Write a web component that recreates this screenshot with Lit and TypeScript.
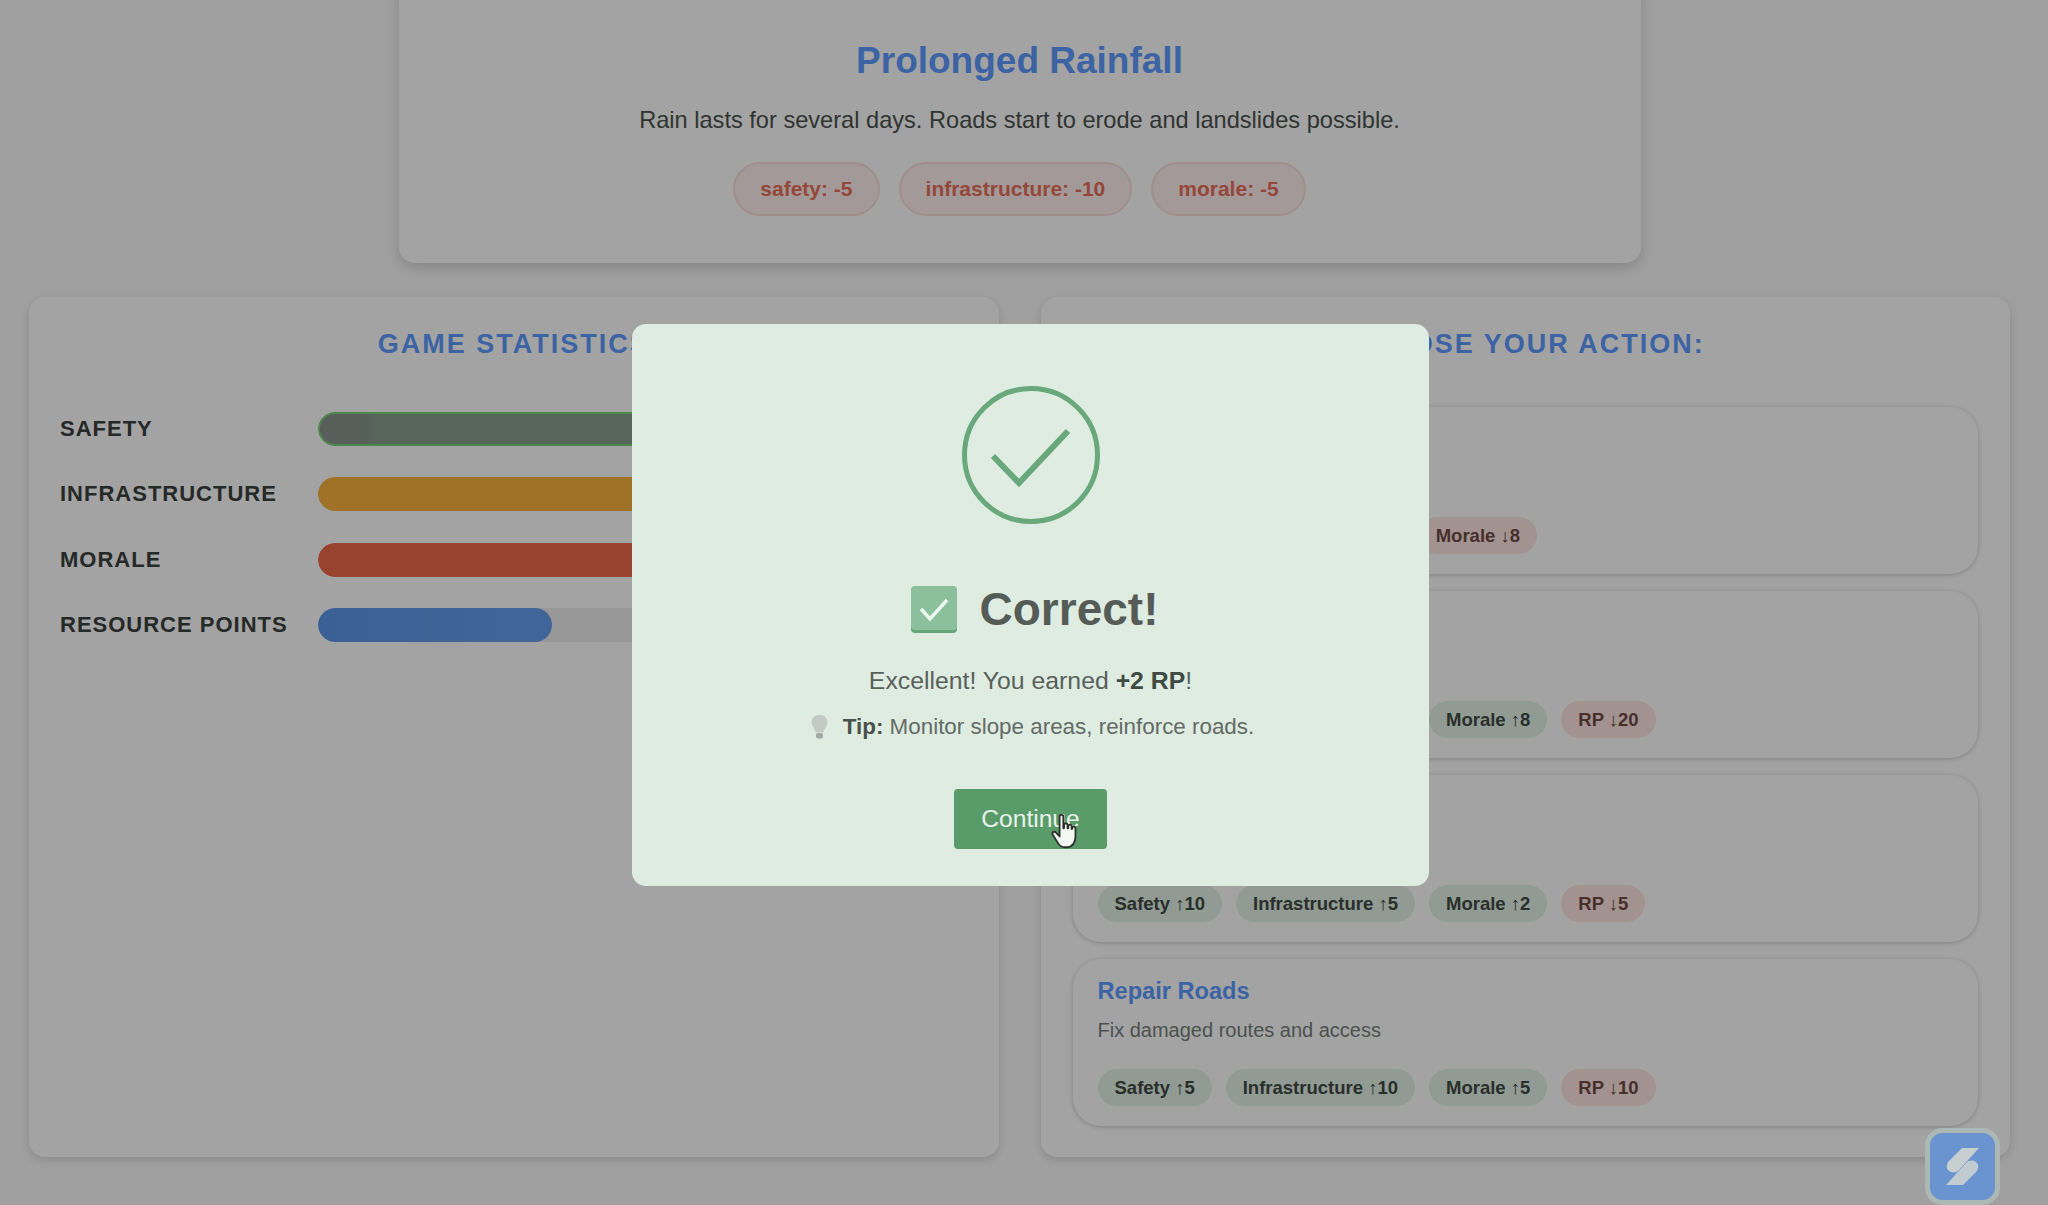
import { LitElement, css, html, svg } from "lit";
import { customElement } from "lit/decorators.js";

type Chip = { label: string; up: boolean };
type Action = { title: string; desc: string; chips: Chip[] };

const up = (label: string): Chip => ({ label, up: true });
const down = (label: string): Chip => ({ label, up: false });

const STATS = [
  { label: "SAFETY", value: 82, cls: "safety" },
  { label: "INFRASTRUCTURE", value: 70, cls: "infra" },
  { label: "MORALE", value: 75, cls: "morale" },
  { label: "RESOURCE POINTS", value: 36, cls: "rp" },
];

const ACTIONS: Action[] = [
  {
    title: "Issue Warning",
    desc: "Alert residents near the slopes",
    chips: [up("Safety ↑5"), up("Infrastructure ↑5"), down("Morale ↓8")],
  },
  {
    title: "Clear Drains",
    desc: "Clear drains and reinforce hillsides",
    chips: [up("Safety ↑5"), up("Infrastructure ↑10"), up("Morale ↑8"), down("RP ↓20")],
  },
  {
    title: "Inspect Slopes",
    desc: "Check slope areas for erosion",
    chips: [up("Safety ↑10"), up("Infrastructure ↑5"), up("Morale ↑2"), down("RP ↓5")],
  },
  {
    title: "Repair Roads",
    desc: "Fix damaged routes and access",
    chips: [up("Safety ↑5"), up("Infrastructure ↑10"), up("Morale ↑5"), down("RP ↓10")],
  },
];

const handCursor = svg`
  <path d="M9 3.5c0-1.6 2.9-1.6 2.9 0v9.2l.6-.1V10c0-1.5 2.7-1.5 2.7.1v2.6l.6-.1v-1.7c0-1.4 2.6-1.4 2.6.2v2.2l.5-.1v-.9c0-1.4 2.5-1.3 2.5.3v6.6c0 4.6-2.4 8.3-6.8 8.3h-1.5c-2.6 0-4-1-5.2-3L3.6 17.6c-.9-1.6 1.3-3 2.6-1.5l2.8 3z"
    fill="#f4f8f4" stroke="#2c302d" stroke-width="1.4" stroke-linejoin="round" />
`;

@customElement("app-root")
export class AppRoot extends LitElement {
  static styles = css`
    :host {
      display: block;
      position: relative;
      height: 1205px;
      overflow: hidden;
      background: #fafafa;
      font-family: "Liberation Sans", Arial, sans-serif;
      color: #5b635e;
    }
    .page {
      padding: 0 38px 0 29px;
    }
    .scenario {
      box-sizing: border-box;
      width: 1242px;
      height: 283px;
      margin: -20px auto 0;
      padding: 57px 0 0;
      background: #fff;
      border-radius: 16px;
      box-shadow: 0 5px 14px rgba(0, 0, 0, 0.16);
      text-align: center;
    }
    .scenario h1 {
      margin: 0;
      font-size: 37px;
      line-height: 48px;
      color: #5f9cff;
    }
    .scenario p {
      margin: 21px 0 0;
      font-size: 23.6px;
      line-height: 28px;
      color: #4c524e;
    }
    .effects {
      display: flex;
      justify-content: center;
      gap: 19px;
      margin-top: 28px;
    }
    .effect {
      box-sizing: border-box;
      height: 54px;
      padding: 0 25px;
      border: 2px solid #fbdedb;
      border-radius: 27px;
      background: #fff0ee;
      color: #e8705c;
      font-size: 21px;
      font-weight: 700;
      line-height: 50px;
    }
    .columns {
      display: grid;
      grid-template-columns: 1fr 1fr;
      gap: 42px;
      margin-top: 34px;
    }
    .panel {
      box-sizing: border-box;
      height: 860px;
      padding: 31px 31px 30px;
      background: #fff;
      border-radius: 16px;
      box-shadow: 0 3px 10px rgba(0, 0, 0, 0.14);
    }
    .panel h2 {
      margin: 0;
      font-size: 27px;
      line-height: 32px;
      letter-spacing: 2px;
      text-align: center;
      color: #5f9cff;
    }
    .stats {
      display: grid;
      gap: 31.3px;
      margin-top: 52px;
    }
    .stat {
      display: grid;
      grid-template-columns: 258px 1fr;
      align-items: center;
    }
    .stat-label {
      font-size: 22px;
      font-weight: 700;
      letter-spacing: 1px;
      color: #3b403d;
    }
    .track {
      height: 34px;
      background: #eeeeee;
      border-radius: 17px;
      overflow: hidden;
    }
    .fill {
      height: 100%;
      border-radius: 17px;
    }
    .safety {
      box-sizing: border-box;
      border: 2px solid #77d477;
      background: linear-gradient(90deg, #8a938e 0 36px, #87a08f 60px);
    }
    .infra {
      background: #fab23e;
    }
    .morale {
      background: #ec6a4a;
    }
    .rp {
      background: linear-gradient(90deg, #5c97ec, #689fef);
    }
    .actions {
      display: grid;
      gap: 17px;
      margin: 47px 1px 0;
    }
    .action {
      box-sizing: border-box;
      height: 167px;
      padding: 17px 25px 0;
      border-radius: 28px;
      background: #ffffff;
      box-shadow: 0 1px 5px rgba(0, 0, 0, 0.2);
    }
    .action h3 {
      margin: 0;
      font-size: 23.6px;
      line-height: 30px;
      color: #5f9cff;
    }
    .action p {
      margin: 9px 0 0;
      font-size: 20px;
      line-height: 30px;
      color: #777f7a;
    }
    .chips {
      display: flex;
      gap: 14px;
      margin-top: 24px;
    }
    .chip {
      box-sizing: border-box;
      height: 37px;
      padding: 0 17px;
      border-radius: 19px;
      font-size: 18.5px;
      font-weight: 700;
      line-height: 37px;
      white-space: nowrap;
    }
    .chip.up {
      background: #e3f1e7;
      color: #414a44;
    }
    .chip.down {
      background: #fde4e2;
      color: #6e4a46;
    }
    .next {
      width: 260px;
      height: 40px;
      margin: 48px 0 0 943px;
      background: #f09a88;
      border-radius: 6px 6px 0 0;
    }
    .overlay {
      position: absolute;
      inset: 0;
      box-sizing: border-box;
      display: flex;
      align-items: center;
      justify-content: center;
      padding: 5px 0 0 13px;
      background: rgba(0, 0, 0, 0.36);
      backdrop-filter: blur(0.7px);
    }
    .modal {
      box-sizing: border-box;
      width: 797px;
      height: 562px;
      padding: 62px 0 0;
      border-radius: 14px;
      background: #deece1;
      text-align: center;
      color: #59605b;
    }
    .ring {
      display: block;
      margin: 0 auto;
    }
    .headline {
      display: flex;
      align-items: center;
      justify-content: center;
      gap: 23px;
      margin-top: 61px;
      padding-left: 8px;
      height: 48px;
      font-size: 46px;
      font-weight: 700;
      color: #555c57;
    }
    .earned {
      margin: 33px 0 0;
      font-size: 24.8px;
      line-height: 30px;
    }
    .earned strong {
      color: #3f4a42;
    }
    .tip {
      display: flex;
      align-items: center;
      justify-content: center;
      gap: 15px;
      margin: 16px 0 0;
      padding-left: 4px;
      font-size: 22.4px;
      line-height: 30px;
      color: #646b66;
    }
    .tip strong {
      color: #4a514c;
    }
    .continue {
      position: relative;
      display: block;
      width: 153px;
      height: 60px;
      margin: 47px auto 0;
      padding: 0;
      border: 0;
      border-radius: 4px;
      background: #5a9b6a;
      color: #e9f2ea;
      font: 24.6px "Liberation Sans", Arial, sans-serif;
    }
    .cursor {
      position: absolute;
      left: 94px;
      top: 23px;
    }
    .badge {
      position: absolute;
      left: 1925px;
      top: 1128px;
    }
  `;

  private renderStats() {
    return STATS.map(
      (s) => html`
        <div class="stat">
          <div class="stat-label">${s.label}</div>
          <div class="track">
            <div class="fill ${s.cls}" style="width: ${s.value}%"></div>
          </div>
        </div>
      `,
    );
  }

  private renderActions() {
    return ACTIONS.map(
      (a) => html`
        <div class="action">
          <h3>${a.title}</h3>
          <p>${a.desc}</p>
          <div class="chips">
            ${a.chips.map((c) => html`<span class="chip ${c.up ? "up" : "down"}">${c.label}</span>`)}
          </div>
        </div>
      `,
    );
  }

  render() {
    return html`
      <div class="page">
        <section class="scenario">
          <h1>Prolonged Rainfall</h1>
          <p>Rain lasts for several days. Roads start to erode and landslides possible.</p>
          <div class="effects">
            <span class="effect">safety: -5</span>
            <span class="effect">infrastructure: -10</span>
            <span class="effect">morale: -5</span>
          </div>
        </section>
        <div class="columns">
          <section class="panel">
            <h2>GAME STATISTICS</h2>
            <div class="stats">${this.renderStats()}</div>
          </section>
          <section class="panel">
            <h2>CHOOSE YOUR ACTION:</h2>
            <div class="actions">${this.renderActions()}</div>
          </section>
        </div>
        <div class="next"></div>
      </div>

      <div class="overlay">
        <div class="modal">
          <svg class="ring" width="138" height="138" viewBox="0 0 138 138" fill="none" stroke="#69a87b">
            <circle cx="69" cy="69" r="66.5" stroke-width="5" />
            <path d="M31 70l26 27 49-52" stroke-width="6" />
          </svg>
          <div class="headline">
            <svg width="46" height="47" viewBox="0 0 46 47">
              <rect y="1" width="46" height="46" rx="4" fill="#63a679" />
              <rect width="46" height="44" rx="4" fill="#8cc09c" />
              <path d="M10 23l9 10 17-19" fill="none" stroke="#eef6f0" stroke-width="3.5" />
            </svg>
            <span>Correct!</span>
          </div>
          <p class="earned">Excellent! You earned <strong>+2 RP</strong>!</p>
          <div class="tip">
            <svg width="17" height="24" viewBox="0 0 17 24">
              <path d="M8.5 0C3.6 0 0.5 3.4 0.5 7.4c0 3.4 3 5.4 4.2 10h7.6c1.2-4.6 4.2-6.6 4.2-10C16.5 3.4 13.4 0 8.5 0z" fill="#c3cac5" />
              <rect x="5" y="18" width="7" height="5.5" rx="2" fill="#a2a8a4" />
            </svg>
            <span><strong>Tip:</strong> Monitor slope areas, reinforce roads.</span>
          </div>
          <button class="continue">
            Continue
            <svg class="cursor" width="36" height="41" viewBox="0 0 28 32">${handCursor}</svg>
          </button>
        </div>
      </div>

      <svg class="badge" width="75" height="77" viewBox="0 0 75 77">
        <rect x="2.5" y="2.5" width="70" height="72" rx="15" fill="#6a94cf" stroke="#abb8b4" stroke-width="5" />
        <path d="M37 20h17L34 42c-3 3-7 3-10 1s-3-7 0-10z" fill="#c7cfd0" />
        <path d="M38 57H21l20-22c3-3 7-3 10-1s3 7 0 10z" fill="#c1cbd2" />
      </svg>
    `;
  }
}
